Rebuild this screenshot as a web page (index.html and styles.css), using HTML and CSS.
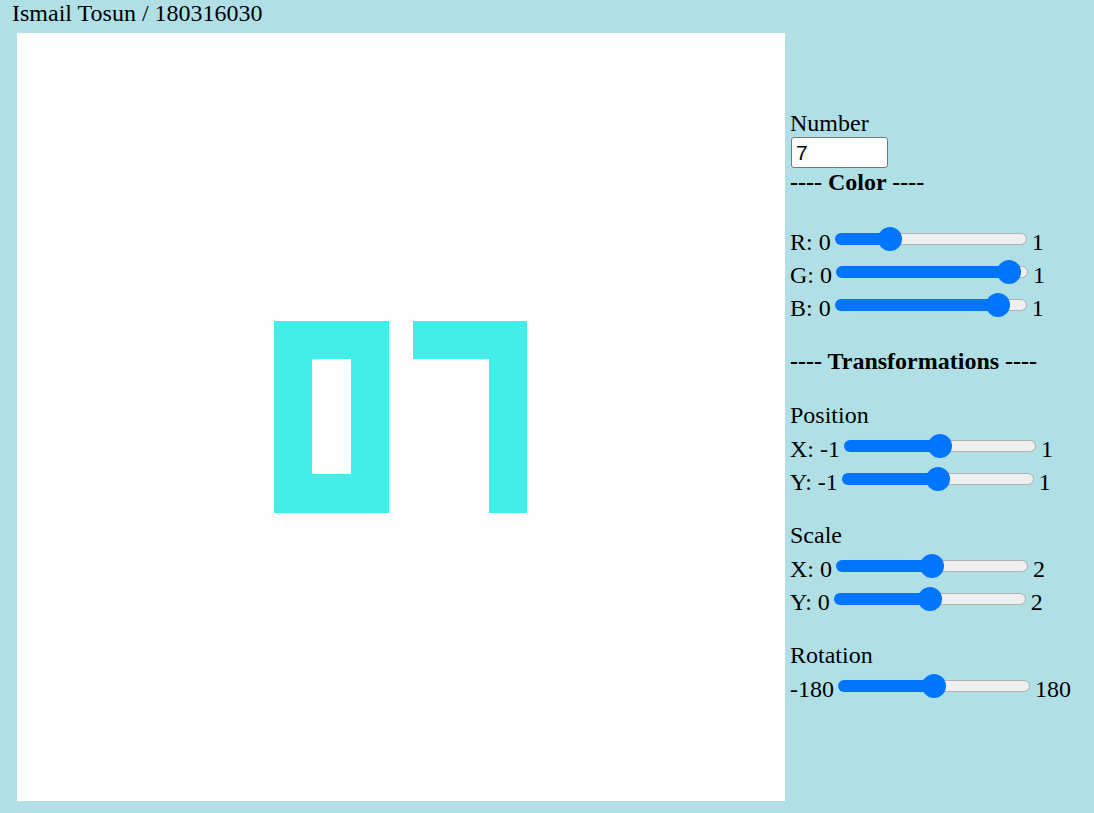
FILE: index.html
```html
<!DOCTYPE html>
<html>
<head>
<meta charset="utf-8">
<title>Ismail Tosun / 180316030</title>
<link rel="stylesheet" href="styles.css">
</head>
<body>
<div class="title">Ismail Tosun / 180316030</div>
<div class="main">
  <div class="canvas">
    <svg width="768" height="768" viewBox="0 0 768 768">
      <g fill="#42efe8">
        <rect x="257" y="288" width="115" height="38"/>
        <rect x="257" y="441" width="115" height="39"/>
        <rect x="257" y="326" width="38" height="115"/>
        <rect x="334" y="326" width="38" height="115"/>
        <rect x="396" y="288" width="114" height="38"/>
        <rect x="472" y="326" width="38" height="154"/>
      </g>
    </svg>
  </div>
  <div class="panel">
    <div class="line">Number</div>
    <input class="num" type="text" value="7">
    <div class="line heading">---- Color ----</div>
    <div class="row first"><span class="lbl">R: 0</span><input class="slider" type="range" min="0" max="1" step="0.001" value="0.256" style="--p:0.256"><span class="lbl">1</span></div>
    <div class="row"><span class="lbl">G: 0</span><input class="slider" type="range" min="0" max="1" step="0.001" value="0.964" style="--p:0.964"><span class="lbl">1</span></div>
    <div class="row"><span class="lbl">B: 0</span><input class="slider" type="range" min="0" max="1" step="0.001" value="0.904" style="--p:0.904"><span class="lbl">1</span></div>
    <div class="line heading trans">---- Transformations ----</div>
    <div class="line section-a">Position</div>
    <div class="row"><span class="lbl">X: -1</span><input class="slider" type="range" min="-1" max="1" step="0.01" value="0" style="--p:0.5"><span class="lbl">1</span></div>
    <div class="row"><span class="lbl">Y: -1</span><input class="slider" type="range" min="-1" max="1" step="0.01" value="0" style="--p:0.5"><span class="lbl">1</span></div>
    <div class="line section">Scale</div>
    <div class="row"><span class="lbl">X: 0</span><input class="slider" type="range" min="0" max="2" step="0.01" value="1" style="--p:0.5"><span class="lbl">2</span></div>
    <div class="row"><span class="lbl">Y: 0</span><input class="slider" type="range" min="0" max="2" step="0.01" value="1" style="--p:0.5"><span class="lbl">2</span></div>
    <div class="line section">Rotation</div>
    <div class="row"><span class="lbl">-180</span><input class="slider" type="range" min="-180" max="180" step="1" value="0" style="--p:0.5"><span class="lbl">180</span></div>
  </div>
</div>
</body>
</html>
```

FILE: styles.css
```css
html, body {
  margin: 0;
  padding: 0;
}
body {
  background: #b0e0e6;
  font-family: "Liberation Serif", "Times New Roman", serif;
  font-size: 24px;
  line-height: 27px;
  color: #000;
  height: 813px;
  overflow: hidden;
}
.title {
  padding-left: 12px;
  height: 27px;
}
.main {
  display: flex;
  align-items: flex-start;
  margin-top: 6px;
}
.canvas {
  margin-left: 17px;
  width: 768px;
  height: 768px;
  background: #fefefe;
}
.canvas svg {
  display: block;
}
.panel {
  margin-left: 5px;
  padding-top: 77px;
  display: flex;
  flex-direction: column;
  align-items: flex-start;
}
.line {
  height: 27px;
  line-height: 27px;
  white-space: nowrap;
}
.heading {
  font-weight: bold;
  position: relative;
  top: 1px;
}
.num {
  box-sizing: border-box;
  width: 97px;
  height: 31px;
  margin: 0 0 0 1px;
  padding: 1px 4px;
  border: 1px solid #767676;
  border-radius: 3px;
  background: #fff;
  font-family: "Liberation Sans", Arial, sans-serif;
  font-size: 21px;
  color: #000;
}
.row {
  display: flex;
  align-items: center;
  height: 33px;
}
.row.first {
  margin-top: 27px;
}
.lbl {
  align-self: flex-end;
  line-height: 27px;
  white-space: nowrap;
  position: relative;
  top: 1px;
}
.trans {
  margin-top: 26px;
}
.section-a {
  margin-top: 28px;
}
.section {
  margin-top: 27px;
}
.slider {
  -webkit-appearance: none;
  appearance: none;
  width: 192px;
  height: 24px;
  margin: 0 5px 0 4px;
  padding: 0;
  background: transparent;
}
.slider::-webkit-slider-runnable-track {
  box-sizing: border-box;
  height: 12px;
  border-radius: 6px;
  border: 1px solid transparent;
  background:
    linear-gradient(to right, #0075ff calc(13px + var(--p) * 166px), transparent calc(13px + var(--p) * 166px)) border-box,
    linear-gradient(#efefef, #efefef) padding-box,
    linear-gradient(#b2b2b2, #b2b2b2) border-box;
}
.slider::-webkit-slider-thumb {
  -webkit-appearance: none;
  appearance: none;
  width: 24px;
  height: 24px;
  margin-top: -7px;
  border: none;
  border-radius: 50%;
  background: #0075ff;
}
```
